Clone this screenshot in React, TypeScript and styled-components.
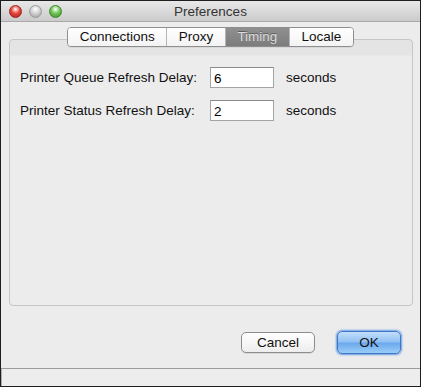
import React from 'react';
import styled, { createGlobalStyle } from 'styled-components';

const Global = createGlobalStyle`
    html, body {
        margin: 0;
        padding: 0;
        background: #fff;
    }
    * {
        box-sizing: border-box;
    }
`;

const Window = styled.div`
    width: 421px;
    height: 387px;
    border: 1px solid #1e1e1e;
    background: #ececec;
    display: flex;
    flex-direction: column;
    font-family: 'Liberation Sans', Arial, sans-serif;
    font-size: 13.5px;
    color: #111;
`;

const TitleBar = styled.div`
    height: 21px;
    flex: none;
    display: flex;
    align-items: center;
    position: relative;
    padding-left: 8px;
    background: linear-gradient(#e8e8e8, #cbcbcb);
    border-bottom: 1px solid #a9a9a9;
`;

const Lights = styled.div`
    display: flex;
    gap: 7px;
`;

const Light = styled.span<{ $c: string; $d: string }>`
    width: 13px;
    height: 13px;
    border-radius: 50%;
    border: 1px solid ${(p) => p.$d};
    background: radial-gradient(circle at 50% 30%, #fff 0, ${(p) => p.$c} 45%, ${(p) => p.$d} 100%);
`;

const Title = styled.div`
    position: absolute;
    left: 0;
    right: 0;
    text-align: center;
    color: #333;
    pointer-events: none;
`;

const Tabs = styled.div`
    display: flex;
    align-self: center;
    height: 20px;
    margin-top: 5px;
    margin-bottom: -8px;
    position: relative;
    z-index: 1;
    border: 1px solid #8e8e8e;
    border-radius: 4px;
    overflow: hidden;
    box-shadow: 0 1px 0 rgba(0, 0, 0, 0.05);
`;

const Tab = styled.div<{ $active?: boolean }>`
    display: flex;
    align-items: center;
    padding: 0 11.5px;
    line-height: 1;
    background: ${(p) => (p.$active ? 'linear-gradient(#909090, #7c7c7c)' : 'linear-gradient(#ffffff, #f3f3f3)')};
    color: ${(p) => (p.$active ? '#dcdcdc' : '#111')};
    text-shadow: ${(p) => (p.$active ? '0 -1px 0 rgba(0,0,0,0.35)' : 'none')};
    & + & {
        border-left: 1px solid #b4b4b4;
    }
`;

const Panel = styled.div`
    height: 267px;
    flex: none;
    margin: 0 7px 0 8px;
    border: 1px solid #c6c6c6;
    border-radius: 4px;
    background: linear-gradient(#e4e4e4 0, #e4e4e4 15px, #ececec 16px);
    padding: 27px 10px 0;
    display: grid;
    grid-template-columns: 178px 64px auto;
    grid-auto-rows: 21px;
    row-gap: 12px;
    column-gap: 12px;
    align-content: start;
    align-items: center;
`;

const Label = styled.div``;

const Field = styled.input`
    width: 64px;
    height: 21px;
    border: 1px solid #a4a4a4;
    border-top-color: #8a8a8a;
    background: #fff;
    padding: 2px 3px 0;
    font: inherit;
    color: #000;
    outline: none;
`;

const Unit = styled.div``;

const Buttons = styled.div`
    display: flex;
    justify-content: flex-end;
    align-items: center;
    gap: 22px;
    height: 23px;
    margin: 25px 19px 0 0;
`;

const Button = styled.button<{ $primary?: boolean }>`
    height: ${(p) => (p.$primary ? '23px' : '21px')};
    width: ${(p) => (p.$primary ? '64px' : '74px')};
    border-radius: 5px;
    font: inherit;
    color: #111;
    padding: 0;
    border: 1px solid ${(p) => (p.$primary ? '#3f77c6' : '#8c8c8c')};
    background: ${(p) =>
        p.$primary
            ? 'linear-gradient(#c3defa 0%, #8fc0f3 48%, #6aa7ee 52%, #9acdf8 100%)'
            : 'linear-gradient(#ffffff, #ededed)'};
    box-shadow: ${(p) => (p.$primary ? '0 0 2px 1px #6a9ce8' : '0 1px 0 rgba(0,0,0,0.08)')};
`;

const StatusBar = styled.div`
    margin-top: auto;
    height: 18px;
    border-top: 1px solid #9c9c9c;
    border-left: 1px solid #b0b0b0;
    background: #ededed;
`;

export default function App() {
    return (
        <>
            <Global />
            <Window>
                <TitleBar>
                    <Lights>
                        <Light $c="#e8453d" $d="#a3211b" />
                        <Light $c="#d2d2d2" $d="#9a9a9a" />
                        <Light $c="#72c556" $d="#3c8a2a" />
                    </Lights>
                    <Title>Preferences</Title>
                </TitleBar>
                <Tabs>
                    <Tab>Connections</Tab>
                    <Tab>Proxy</Tab>
                    <Tab $active>Timing</Tab>
                    <Tab>Locale</Tab>
                </Tabs>
                <Panel>
                    <Label>Printer Queue Refresh Delay:</Label>
                    <Field defaultValue="6" />
                    <Unit>seconds</Unit>
                    <Label>Printer Status Refresh Delay:</Label>
                    <Field defaultValue="2" />
                    <Unit>seconds</Unit>
                </Panel>
                <Buttons>
                    <Button>Cancel</Button>
                    <Button $primary>OK</Button>
                </Buttons>
                <StatusBar />
            </Window>
        </>
    );
}
